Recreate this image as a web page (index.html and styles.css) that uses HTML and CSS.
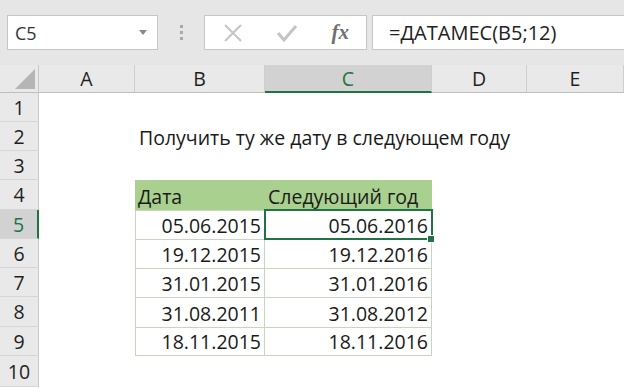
FILE: index.html
```html
<!DOCTYPE html>
<html lang="ru">
<head>
  <meta charset="UTF-8" />
  <title>ДАТАМЕС</title>
  <link rel="stylesheet" href="styles.css">
</head>
<body>

<div class="formula-bar">
  <div class="name-box">
    <span>C5</span>
    <svg class="caret" width="8" height="5" viewBox="0 0 8 5"><path d="M0 0h8L4 5z" fill="#8a8a8a"/></svg>
  </div>
  <div class="grip"><i></i><i></i><i></i></div>
  <div class="fx-buttons">
    <svg width="20" height="20" viewBox="0 0 20 20"><path d="M2 2L18 18M18 2L2 18" stroke="#c4c4c4" stroke-width="2" fill="none"/></svg>
    <svg width="22" height="20" viewBox="0 0 22 20"><path d="M2 10l6 7L20 3" stroke="#c4c4c4" stroke-width="3" fill="none"/></svg>
    <span class="fx">fx</span>
  </div>
  <div class="formula">=ДАТАМЕС(B5;12)</div>
</div>

<div class="sheet">
  <div class="corner"><span class="tri"></span></div>
  <div class="col-head">A</div>
  <div class="col-head">B</div>
  <div class="col-head active">C</div>
  <div class="col-head">D</div>
  <div class="col-head">E</div>

  <div class="row-head">1</div>
  <div class="cell"></div><div class="cell"></div><div class="cell"></div><div class="cell"></div><div class="cell"></div>

  <div class="row-head">2</div>
  <div class="cell"></div>
  <div class="cell title">Получить ту же дату в следующем году</div>
  <div class="cell"></div><div class="cell"></div><div class="cell"></div>

  <div class="row-head">3</div>
  <div class="cell"></div><div class="cell"></div><div class="cell"></div><div class="cell"></div><div class="cell"></div>

  <div class="row-head">4</div>
  <div class="cell"></div>
  <div class="cell th">Дата</div>
  <div class="cell th">Следующий год</div>
  <div class="cell"></div><div class="cell"></div>

  <div class="row-head active">5</div>
  <div class="cell"></div>
  <div class="cell td">05.06.2015</div>
  <div class="cell td selected">05.06.2016<span class="handle"></span></div>
  <div class="cell"></div><div class="cell"></div>

  <div class="row-head">6</div>
  <div class="cell"></div>
  <div class="cell td">19.12.2015</div>
  <div class="cell td">19.12.2016</div>
  <div class="cell"></div><div class="cell"></div>

  <div class="row-head">7</div>
  <div class="cell"></div>
  <div class="cell td">31.01.2015</div>
  <div class="cell td">31.01.2016</div>
  <div class="cell"></div><div class="cell"></div>

  <div class="row-head">8</div>
  <div class="cell"></div>
  <div class="cell td">31.08.2011</div>
  <div class="cell td">31.08.2012</div>
  <div class="cell"></div><div class="cell"></div>

  <div class="row-head">9</div>
  <div class="cell"></div>
  <div class="cell td last">18.11.2015</div>
  <div class="cell td last">18.11.2016</div>
  <div class="cell"></div><div class="cell"></div>

  <div class="row-head">10</div>
  <div class="cell"></div><div class="cell"></div><div class="cell"></div><div class="cell"></div><div class="cell"></div>
</div>

</body>
</html>
```

FILE: styles.css
```css
body {
  margin: 0;
  width: 624px;
  height: 389px;
  overflow: hidden;
  font-family: "Open Sans", "Noto Sans", sans-serif;
  color: #1a1a1a;
  background: #fff;
}

/* top strip: name box + formula input */
.formula-bar {
  height: 65px;
  background: #e6e6e6;
  display: flex;
  align-items: center;
  padding-left: 7px;
  box-sizing: border-box;
}
.name-box {
  width: 151px;
  height: 35px;
  box-sizing: border-box;
  background: #fff;
  border: 1px solid #c6c6c6;
  display: flex;
  align-items: center;
  justify-content: space-between;
  padding: 0 10px 0 7px;
  font-size: 18px;
  color: #333;
}
.grip {
  width: 46px;
  display: flex;
  flex-direction: column;
  align-items: center;
  gap: 3px;
}
.grip i {
  width: 3px;
  height: 3px;
  background: #a8a8a8;
}
.fx-buttons {
  width: 163px;
  height: 35px;
  box-sizing: border-box;
  background: #fff;
  border: 1px solid #c6c6c6;
  display: flex;
  align-items: center;
  justify-content: space-between;
  padding: 0 17px 0 18px;
}
.fx {
  font-family: "Liberation Serif", serif;
  font-style: italic;
  font-weight: bold;
  font-size: 21px;
  color: #707070;
}
.formula {
  flex: 1;
  height: 35px;
  margin-left: 5px;
  box-sizing: border-box;
  background: #fff;
  border: 1px solid #c6c6c6;
  border-right: none;
  display: flex;
  align-items: center;
  padding-left: 16px;
  font-size: 20px;
  color: #222;
}

/* grid */
.sheet {
  display: grid;
  grid-template-columns: 39px 96px 130px 167px 95px 97px;
  grid-template-rows: 28px 29px 29px 29px 30px 29px 29px 29px 30px 29px 31px;
  font-size: 19.5px;
}
.corner {
  background: #e9e9e9;
  border-right: 1px solid #c8c8c8;
  border-bottom: 1px solid #bfbfbf;
  position: relative;
}
.tri {
  position: absolute;
  right: 3px;
  bottom: 3px;
  width: 0;
  height: 0;
  border-left: 20px solid transparent;
  border-bottom: 20px solid #b5b5b5;
}
.col-head {
  background: #e9e9e9;
  border-right: 1px solid #cfcfcf;
  border-bottom: 1px solid #bfbfbf;
  display: flex;
  align-items: center;
  justify-content: center;
  color: #1f1f1f;
}
.col-head.active {
  background: #d2d2d2;
  color: #217346;
  border-bottom: 2px solid #217346;
}
.row-head {
  background: #e9e9e9;
  border-right: 1px solid #c8c8c8;
  border-bottom: 1px solid #d6d6d6;
  display: flex;
  align-items: center;
  justify-content: center;
  color: #1f1f1f;
}
.row-head.active {
  background: #d2d2d2;
  color: #217346;
  border-right: 2px solid #217346;
}
.cell {
  display: flex;
  align-items: flex-end;
  padding: 0 3px 0;
  line-height: 26px;
  white-space: nowrap;
  position: relative;
}
.title {
  overflow: visible;
  padding-left: 4px;
}
.th {
  background: #a9d08e;
  border-right: 1px solid #a9d08e;
}
.td {
  justify-content: flex-end;
  border-top: 1px solid #c9d6bf;
  border-right: 1px solid #c9d6bf;
}
.sheet > .td:nth-child(6n+3) {
  border-left: 1px solid #c9d6bf;
}
.td.last {
  border-bottom: 1px solid #c9d6bf;
}
.selected {
  outline: 2px solid #217346;
  outline-offset: -1px;
  z-index: 1;
}
.handle {
  position: absolute;
  right: -4px;
  bottom: -4px;
  width: 6px;
  height: 6px;
  background: #217346;
  border: 1px solid #fff;
}
```
